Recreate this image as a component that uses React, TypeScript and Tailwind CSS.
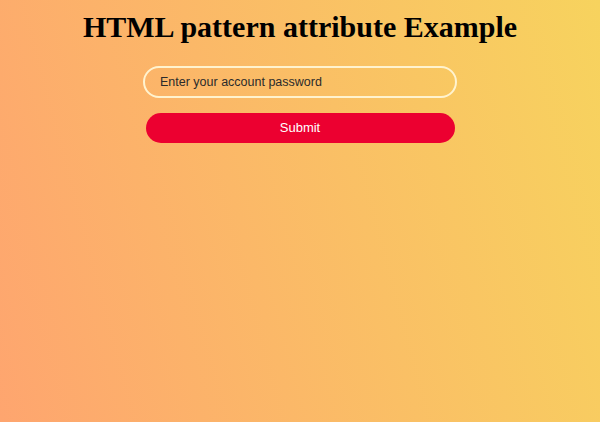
export default function App() {
  return (
    <div className="min-h-[422px] w-full bg-[linear-gradient(75deg,#fea56f_0%,#f7d35e_100%)] font-['Liberation_Sans',Arial,sans-serif]">
      <h1 className="pt-[10px] text-center font-['Liberation_Serif','Times_New_Roman',serif] text-[30px] font-bold leading-[34px] text-black">
        HTML pattern attribute Example
      </h1>
      <form className="mx-auto mt-[22px] flex w-[314px] flex-col items-center gap-[15px]">
        <input
          type="password"
          placeholder="Enter your account password"
          className="h-[32px] w-[314px] rounded-full border-2 border-[#fff3cf] bg-transparent px-[15px] text-[12.5px] text-[#333] placeholder:text-[#2b2b2b] focus:outline-none"
        />
        <button
          type="submit"
          className="h-[30px] w-[309px] rounded-full bg-[#ec0030] text-[13px] text-white"
        >
          Submit
        </button>
      </form>
    </div>
  );
}
